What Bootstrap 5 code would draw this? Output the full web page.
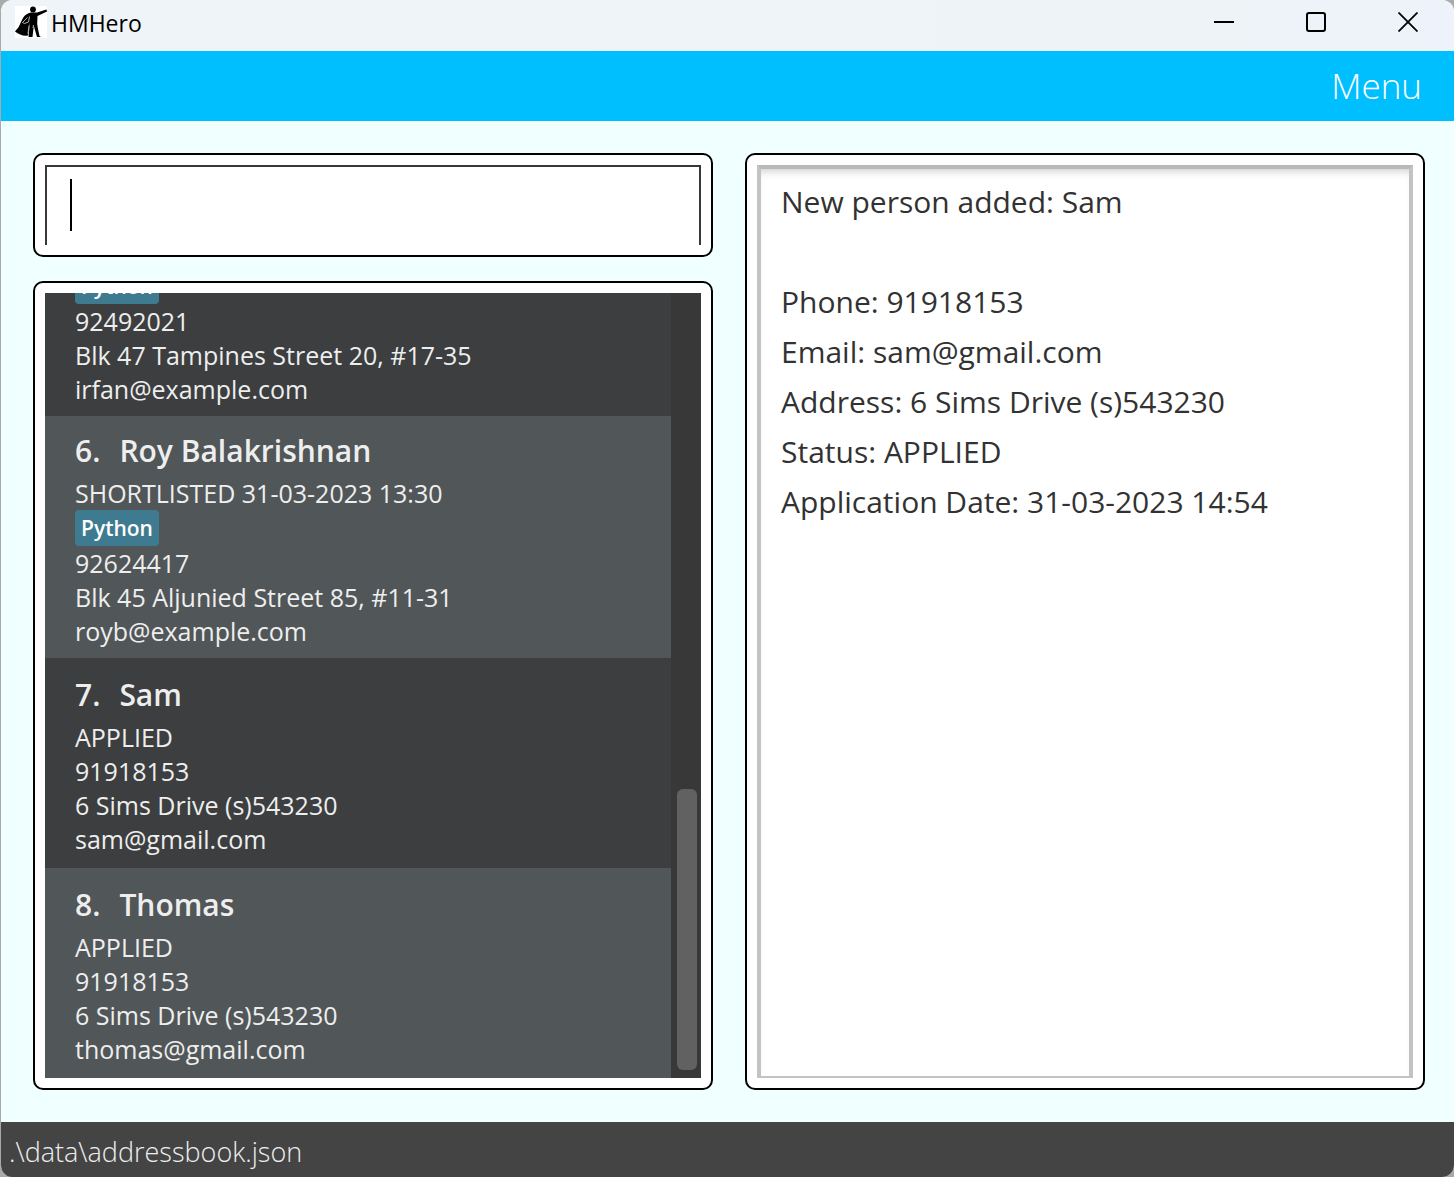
<!DOCTYPE html>
<html lang="en">
<head>
<meta charset="utf-8">
<meta name="viewport" content="width=device-width, initial-scale=1">
<title>HMHero</title>
<link href="https://cdn.jsdelivr.net/npm/bootstrap@5.3.0/dist/css/bootstrap.min.css" rel="stylesheet">
<style>
  body { font-family: "Open Sans", "Noto Sans", sans-serif; background: #aaa; }
  .app-window { height: 100vh; min-height: 600px; background: #f0ffff; border-left: 1px solid #a9a9a9; border-radius: 12px; }
  .title-bar { height: 51px; padding: 0 30px 7px 14px; background: linear-gradient(90deg, #eff4f9, #edf3f6 80%, #eef3fb); }
  .app-name { font-size: 23px; line-height: 32px; padding-top: 2px; color: #000; }
  .win-btn { width: 32px; height: 32px; }
  .win-controls { gap: 60px; }
  .menu-bar { height: 70px; padding: 0 32px; background: #00bfff; }
  .menu-bar a { font-size: 35px; line-height: 48px; font-weight: 300; color: #fff; }
  .main-area { padding: 32px 29px 32px 32px; gap: 32px; min-height: 0; }
  .pane { flex: 1 1 0; min-width: 0; min-height: 0; }
  .left-pane { gap: 24px; }
  .box { background: #fff; border: 2px solid #000; border-radius: 10px; padding: 10px; min-height: 0; }
  .command { display: block; height: 80px; border: 2px solid #383838; border-bottom: 0; padding: 10px 24px; font-size: 28px; border-radius: 0; background: #fff; outline: 0; }
  .caret { left: 35px; top: 24px; width: 2px; height: 52px; background: #000; }
  .people-view { background: #383838; overflow: hidden; min-height: 0; }
  .people { justify-content: flex-end; overflow: hidden; color: #eee; }
  .person { flex: none; min-height: 210px; padding: 14px 30px 10px; background: #515658; font-size: 25px; line-height: 34px; }
  .person:nth-child(odd) { background: #3c3e3f; }
  .person:first-child { min-height: 0; }
  .person h2 { font-size: 30px; line-height: 42px; font-weight: 600; margin: 0 0 4px; gap: 19px; }
  .skill { font-size: 21px; line-height: 36px; height: 36px; font-weight: 600; padding: 0 6px; border-radius: 4px; background: #3e7b91; color: #fff; }
  .track { width: 30px; padding: 8px 4px 8px 6px; }
  .thumb { height: 281px; border-radius: 6px; background: #616161; }
  .result { resize: none; border: 4px solid #c3c3c3; border-top-color: #b9b9b9; border-bottom-width: 2px; border-radius: 0; padding: 8px 20px; font-size: 30px; line-height: 50px; color: #323232; outline: 0; box-shadow: inset 0 8px 8px -6px #ccc; }
  .status-bar { height: 55px; padding: 0 8px; background: #444; color: #eee; font-size: 27px; font-weight: 300; line-height: 59px; }
</style>
</head>
<body>
<div class="app-window d-flex flex-column overflow-hidden">
  <header class="title-bar flex-shrink-0 d-flex align-items-center justify-content-between">
    <div class="d-flex align-items-center gap-1">
      <svg width="32" height="32" viewBox="0 0 32 32" aria-hidden="true">
        <rect width="32" height="32" fill="#fff"/>
        <circle cx="18" cy="3.500" r="2.900"/>
        <path d="M13 8q1-1.500 3-1.500h6l9.500-3 .5 2L22.500 10l-.3 8 .8 5 1.500 7 1.500 1h-4L18.800 20 17.500 31h-4l1-11z"/>
        <path d="M14.500 7Q9 8 6 16 4 22 0 25.500q6 5 13 4l1.500-9-.5-8z"/>
        <path d="M14.500 10.500l-1 5.500-4 1.500-2-1 5-5M14 19.500l-1 8.500M18.500 19l-.5 3" stroke="#ddd" stroke-width=".8" fill="none"/>
      </svg>
      <span class="app-name">HMHero</span>
    </div>
    <div class="win-controls d-flex">
      <button class="win-btn btn p-0 border-0 d-flex align-items-center justify-content-center" aria-label="Minimize"><svg width="20" height="20"><path d="M0 10h20" stroke="#000" stroke-width="2"/></svg></button>
      <button class="win-btn btn p-0 border-0 d-flex align-items-center justify-content-center" aria-label="Maximize"><svg width="20" height="20"><rect x="1" y="1" width="18" height="18" rx="2" fill="none" stroke="#000" stroke-width="2"/></svg></button>
      <button class="win-btn btn p-0 border-0 d-flex align-items-center justify-content-center" aria-label="Close"><svg width="20" height="20"><path d="M.5.500l19 19M19.500.500l-19 19" stroke="#000" stroke-width="1.800"/></svg></button>
    </div>
  </header>
  <nav class="menu-bar flex-shrink-0 d-flex align-items-center justify-content-end"><a href="#" class="text-decoration-none">Menu</a></nav>
  <main class="main-area d-flex flex-grow-1">
    <div class="pane left-pane d-flex flex-column">
      <div class="box flex-shrink-0 position-relative">
        <input class="command w-100" type="text" aria-label="Command">
        <span class="caret position-absolute"></span>
      </div>
      <div class="box d-flex flex-column flex-grow-1">
        <div class="people-view d-flex flex-grow-1">
          <div class="people d-flex flex-column flex-grow-1">
            <article class="person d-flex flex-column justify-content-center">
              <div class="d-flex"><span class="skill">Python</span></div>
              <div>92492021</div>
              <div>Blk 47 Tampines Street 20, #17-35</div>
              <div>irfan@example.com</div>
            </article>
            <article class="person d-flex flex-column justify-content-center">
              <h2 class="d-flex"><span>6.</span><span>Roy Balakrishnan</span></h2>
              <div>SHORTLISTED 31-03-2023 13:30</div>
              <div class="d-flex"><span class="skill">Python</span></div>
              <div>92624417</div>
              <div>Blk 45 Aljunied Street 85, #11-31</div>
              <div>royb@example.com</div>
            </article>
            <article class="person d-flex flex-column justify-content-center">
              <h2 class="d-flex"><span>7.</span><span>Sam</span></h2>
              <div>APPLIED</div>
              <div>91918153</div>
              <div>6 Sims Drive (s)543230</div>
              <div>sam@gmail.com</div>
            </article>
            <article class="person d-flex flex-column justify-content-center">
              <h2 class="d-flex"><span>8.</span><span>Thomas</span></h2>
              <div>APPLIED</div>
              <div>91918153</div>
              <div>6 Sims Drive (s)543230</div>
              <div>thomas@gmail.com</div>
            </article>
          </div>
          <div class="track flex-shrink-0 d-flex flex-column justify-content-end"><div class="thumb"></div></div>
        </div>
      </div>
    </div>
    <div class="pane d-flex">
      <div class="box d-flex flex-grow-1">
        <textarea class="result w-100" readonly aria-label="Result">New person added: Sam

Phone: 91918153
Email: sam@gmail.com
Address: 6 Sims Drive (s)543230
Status: APPLIED
Application Date: 31-03-2023 14:54</textarea>
      </div>
    </div>
  </main>
  <footer class="status-bar flex-shrink-0">.\data\addressbook.json</footer>
</div>
<script src="https://cdn.jsdelivr.net/npm/bootstrap@5.3.0/dist/js/bootstrap.bundle.min.js"></script>
</body>
</html>
